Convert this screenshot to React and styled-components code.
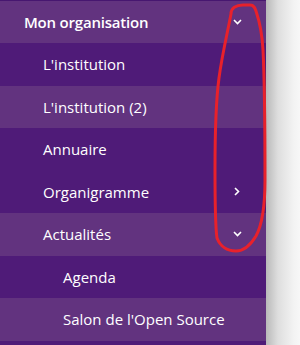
import React from "react";
import styled, { createGlobalStyle } from "styled-components";

const Global = createGlobalStyle`
  html, body { margin: 0; padding: 0; }
  body { font-family: "Open Sans", "Noto Sans", sans-serif; background: #f5f5f5; }
`;

const Page = styled.div`
  position: relative;
  display: flex;
  width: 300px;
  height: 345px;
  overflow: hidden;
`;

const Panel = styled.nav`
  width: 266px;
  flex: none;
  background: #4f1b78;
  border-top: 1px solid #471770;
  display: flex;
  flex-direction: column;
`;

const Side = styled.div`
  flex: 1;
  background: linear-gradient(to right, #b9b9b9 0px, #dedede 12px, #f3f3f3 28px, #f7f7f7 100%);
`;

const Row = styled.div`
  flex: none;
  height: ${(p) => p.$h || 42.5}px;
  display: flex;
  align-items: center;
  justify-content: space-between;
  box-sizing: border-box;
  padding-left: ${(p) => p.$indent}px;
  padding-right: 24px;
  background: ${(p) => (p.$light ? "#62337f" : "#4f1b78")};
  color: #ffffff;
  font-size: 15px;
  font-weight: ${(p) => (p.$bold ? 600 : 400)};
  letter-spacing: ${(p) => (p.$bold ? "-0.2px" : "0")};
`;

const Chevron = ({ dir }) =>
  dir === "down" ? (
    <svg width="9" height="6" viewBox="0 0 9 6">
      <polyline points="1,1 4.5,4.5 8,1" fill="none" stroke="#fff" strokeWidth="1.6" />
    </svg>
  ) : (
    <svg width="6" height="9" viewBox="0 0 6 9" style={{ marginRight: 2 }}>
      <polyline points="1,1 4.5,4.5 1,8" fill="none" stroke="#fff" strokeWidth="1.6" />
    </svg>
  );

const Annotation = styled.svg`
  position: absolute;
  left: 0;
  top: 0;
  pointer-events: none;
`;

const items = [
  { label: "Mon organisation", indent: 24, light: true, bold: true, icon: "down", h: 42 },
  { label: "L'institution", indent: 43, light: false },
  { label: "L'institution (2)", indent: 43, light: true },
  { label: "Annuaire", indent: 43, light: false },
  { label: "Organigramme", indent: 43, light: false, icon: "right" },
  { label: "Actualités", indent: 43, light: true, icon: "down" },
  { label: "Agenda", indent: 63, light: false },
  { label: "Salon de l'Open Source", indent: 63, light: true },
  { label: "", indent: 63, light: false },
];

export default function App() {
  return (
    <>
      <Global />
      <Page>
        <Panel>
          {items.map((it, i) => (
            <Row key={i} $indent={it.indent} $light={it.light} $bold={it.bold} $h={it.h}>
              <span>{it.label}</span>
              {it.icon && <Chevron dir={it.icon} />}
            </Row>
          ))}
        </Panel>
        <Side />
        <Annotation width="300" height="345" viewBox="0 0 300 345">
          <path
            d="M231 14 C231 8 236 5 243 5 L250 5 C254 5 255 8 256 11 C259 20 262 30 263 50 C265 90 265 140 265 180 C265 205 262 225 256 236 C250 246 243 251 236 251 C227 251 220 246 217 238 C215 225 215 200 215 170 C215 130 216 100 219 78 C222 55 227 35 231 14 Z"
            fill="none"
            stroke="#e8212b"
            strokeWidth="3"
            strokeLinejoin="round"
          />
        </Annotation>
      </Page>
    </>
  );
}
